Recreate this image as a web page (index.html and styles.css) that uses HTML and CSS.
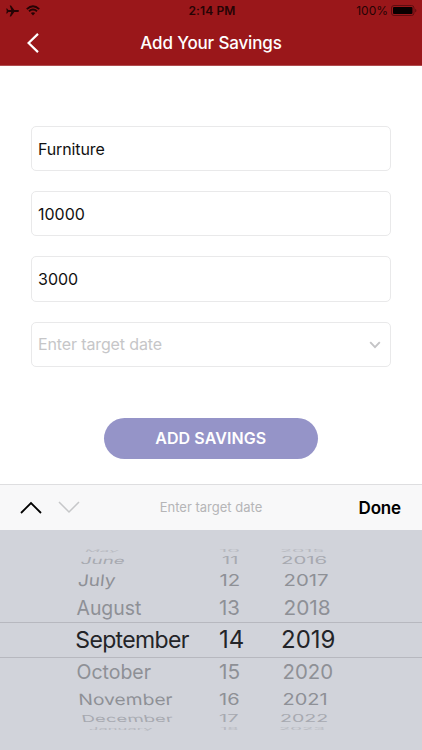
FILE: index.html
```html
<!DOCTYPE html>
<html lang="en">
<head>
<meta charset="utf-8">
<title>Add Your Savings</title>
<link rel="stylesheet" href="styles.css">
</head>
<body>
<div class="screen">
  <header class="header">
    <div class="status">
      <div class="status-left">
        <svg class="plane" viewBox="0 0 13 12"><path d="M13 6c0-.6-.6-.9-1.300-.9H8.300L5 .4H3.700L5.300 5.100H2.300L1.100 3.600H.2L.8 6 .2 8.400h.9L2.300 6.900h3L3.700 11.600H5l3.300-4.700h3.400c.7 0 1.300-.3 1.300-.9z"/></svg>
        <svg class="wifi" viewBox="0 0 14 11"><path d="M.8 4.100Q7-1.700 13.200 4.100M3 6.300q4-3.500 8 0" fill="none" stroke="#250405" stroke-width="1.900"/><path d="M4.800 8.100q2.200-1.800 4.400 0L7 10.400z"/></svg>
      </div>
      <div class="time">2:14 PM</div>
      <div class="status-right"><span>100%</span>
        <svg class="battery" viewBox="0 0 26 11"><rect x=".5" y=".5" width="22.500" height="10" rx="2.500" fill="none" stroke="#5e0d10"/><rect x="2" y="2" width="19.500" height="7" rx="1" fill="#080000"/><path d="M24.200 3.700v3.600c1.600-.5 1.600-3.100 0-3.600z" fill="#5e0d10"/></svg>
      </div>
    </div>
    <div class="nav">
      <svg class="back" viewBox="0 0 12 20"><path d="M11 .9 1.600 10 11 19.100" fill="none" stroke="#fff" stroke-width="2.200"/></svg>
      <h1>Add Your Savings</h1>
    </div>
  </header>
  <main class="form">
    <div class="field"><span>Furniture</span></div>
    <div class="field number"><span>10000</span></div>
    <div class="field number"><span>3000</span></div>
    <div class="field placeholder"><span>Enter target date</span><svg viewBox="0 0 12 8"><path d="m1.200 1.200 4.800 4.900 4.800-4.900" fill="none" stroke="#c4c4c6" stroke-width="1.900"/></svg></div>
    <button class="submit"><span>ADD SAVINGS</span></button>
  </main>
  <div class="toolbar">
    <svg class="prev" viewBox="0 0 22 13"><path d="M1 12 11 2l10 10" fill="none" stroke="#000" stroke-width="1.800"/></svg>
    <svg class="next" viewBox="0 0 22 13"><path d="m1 1 10 10L21 1" fill="none" stroke="#c6c7c9" stroke-width="1.500"/></svg>
    <div class="hint">Enter target date</div>
    <div class="done">Done</div>
  </div>
  <div class="picker">
    <div class="row r1"><span>May</span><span>10</span><span>2015</span></div>
    <div class="row r2"><span>June</span><span>11</span><span>2016</span></div>
    <div class="row r3"><span>July</span><span>12</span><span>2017</span></div>
    <div class="row r4"><span>August</span><span>13</span><span>2018</span></div>
    <div class="row selected"><span>September</span><span>14</span><span>2019</span></div>
    <div class="row r6"><span>October</span><span>15</span><span>2020</span></div>
    <div class="row r7"><span>November</span><span>16</span><span>2021</span></div>
    <div class="row r8"><span>December</span><span>17</span><span>2022</span></div>
    <div class="row r9"><span>January</span><span>18</span><span>2023</span></div>
  </div>
</div>
</body>
</html>
```
FILE: styles.css
```css
* { box-sizing: border-box; }
body { margin: 0; font-family: Inter, "Liberation Sans", sans-serif; background: #fff; }
svg { display: block; flex: none; }
.screen { width: 422px; height: 750px; overflow: hidden; display: flex; flex-direction: column; }
.header { height: 66px; background: #9a171a; border-bottom: 1px solid #b04b4d; flex: none; }
.status { height: 21px; display: grid; grid-template-columns: 1fr auto 1fr; align-items: center; padding: 0 5px 0 6px; color: #250405; font-size: 12px; }
.status-left, .status-right { display: flex; align-items: center; }
.status-left { gap: 7px; fill: #250405; }
.status-right { justify-content: flex-end; gap: 3px; }
.plane { width: 13px; height: 12px; }
.wifi { width: 14px; height: 11px; }
.battery { width: 26px; height: 11px; }
.time { font-weight: 600; padding-left: 1px; letter-spacing: .1px; }
.nav { height: 43px; display: grid; grid-template-columns: 60px 1fr 60px; align-items: center; }
.back { width: 12px; height: 20px; margin-left: 27px; }
.nav h1 { margin: 0; color: #fff; font-size: 17px; font-weight: 500; text-align: center; white-space: nowrap; letter-spacing: -.15px; }
.form { height: 418px; padding: 60px 31px 0 30.5px; display: flex; flex-direction: column; gap: 20px; flex: none; }
.field { height: 45.2px; flex: none; border: 1px solid #e9e9ea; border-radius: 5px; padding: 0 9px 0 6.5px; display: flex; align-items: center; justify-content: space-between; font-size: 16px; letter-spacing: -.13px; color: #111; }
.number { letter-spacing: 0; }
.field svg { width: 12px; height: 8px; margin-top: 2px; }
.placeholder { color: #c6c6c8; }
.submit { width: 214px; height: 41px; margin: 31px auto 0; padding: 0; border: 0; border-radius: 21px; background: #9594c8; color: #fff; font: 600 16px Inter, "Liberation Sans", sans-serif; letter-spacing: .1px; }
.toolbar { height: 46px; flex: none; background: #f8f8f9; border-top: 1px solid #dedee0; display: grid; grid-template-columns: 22px 22px 1fr 43px; column-gap: 16px; align-items: center; padding: 0 21px 0 20px; }
.prev, .next { width: 22px; height: 13px; }
.hint { font-size: 13px; color: #b5b5b7; text-align: center; white-space: nowrap; padding: 0 16px 1px 0; }
.done { font-size: 17px; font-weight: 600; color: #000; text-align: right; letter-spacing: -.15px; }
.picker { flex: 1; background: #d1d3da; padding-top: 16px; }

/* Each wheel row sets its vertical squash (--sy), slant (--skew) and per-column offset and width. */
.row { --sy: 1; --skew: 0deg; --mx: 0px; --ms: 1; --dx: 0px; --ds: 1; --yx: 0px; --ys: 1; display: grid; grid-template-columns: 143px 62px 60px; padding-left: 76px; height: 28px; align-items: center; font-size: 20px; line-height: 0; color: #8e9096; }
.row span { white-space: nowrap; transform-origin: 0 50%; justify-self: start; }
.row span:nth-child(1) { transform: translateX(var(--mx)) scale(var(--ms), var(--sy)) skewX(var(--skew)); }
.row span:nth-child(2) { transform: translateX(var(--dx)) scale(var(--ds), var(--sy)); }
.row span:nth-child(3) { transform: translateX(var(--yx)) scale(var(--ys), var(--sy)); }
.selected { height: 36px; font-size: 24px; color: #232428; border-top: 1px solid #b7b8bf; border-bottom: 1px solid #b7b8bf; }
.selected span:first-child { font-size: 23px; letter-spacing: -.65px; margin-left: -.7px; }
.r1 { height: 8px; padding-top: 2px; color: #b7b9c0; --sy: .17; --skew: -8deg; --mx: 9px; --ms: .84; --yx: -1px; --ys: .98; }
.r2 { height: 13px; color: #a7a9b0; --sy: .48; --skew: -8deg; --mx: 5px; --ms: .94; --dx: 3px; --yx: 0px; --ys: 1.02; }
.r3 { height: 27px; padding-bottom: 1px; --sy: .8; --skew: -5deg; --mx: 2px; --ms: .95; --dx: .5px; --ds: 1.02; --yx: 2.500px; --ys: 1.02; }
.r4 { --mx: .5px; --ms: .97; --ds: 1.02; --yx: 2.500px; --ys: 1.04; }
.r6 { --mx: .5px; --ms: .975; --ds: 1.04; --yx: 1.500px; --ys: 1.02; }
.r7 { height: 27px; --sy: .78; --skew: 3deg; --mx: 2.500px; --ms: .96; --yx: 1.500px; }
.r8 { height: 11px; color: #a7a9b0; --sy: .48; --skew: 6deg; --mx: 5.500px; --ms: .93; --yx: -1px; --ys: .98; }
.r9 { height: 10px; color: #b7b9c0; --sy: .17; --mx: 13px; --ms: .83; --dx: 1px; --ds: .9; --yx: -2px; --ys: .93; }
```
